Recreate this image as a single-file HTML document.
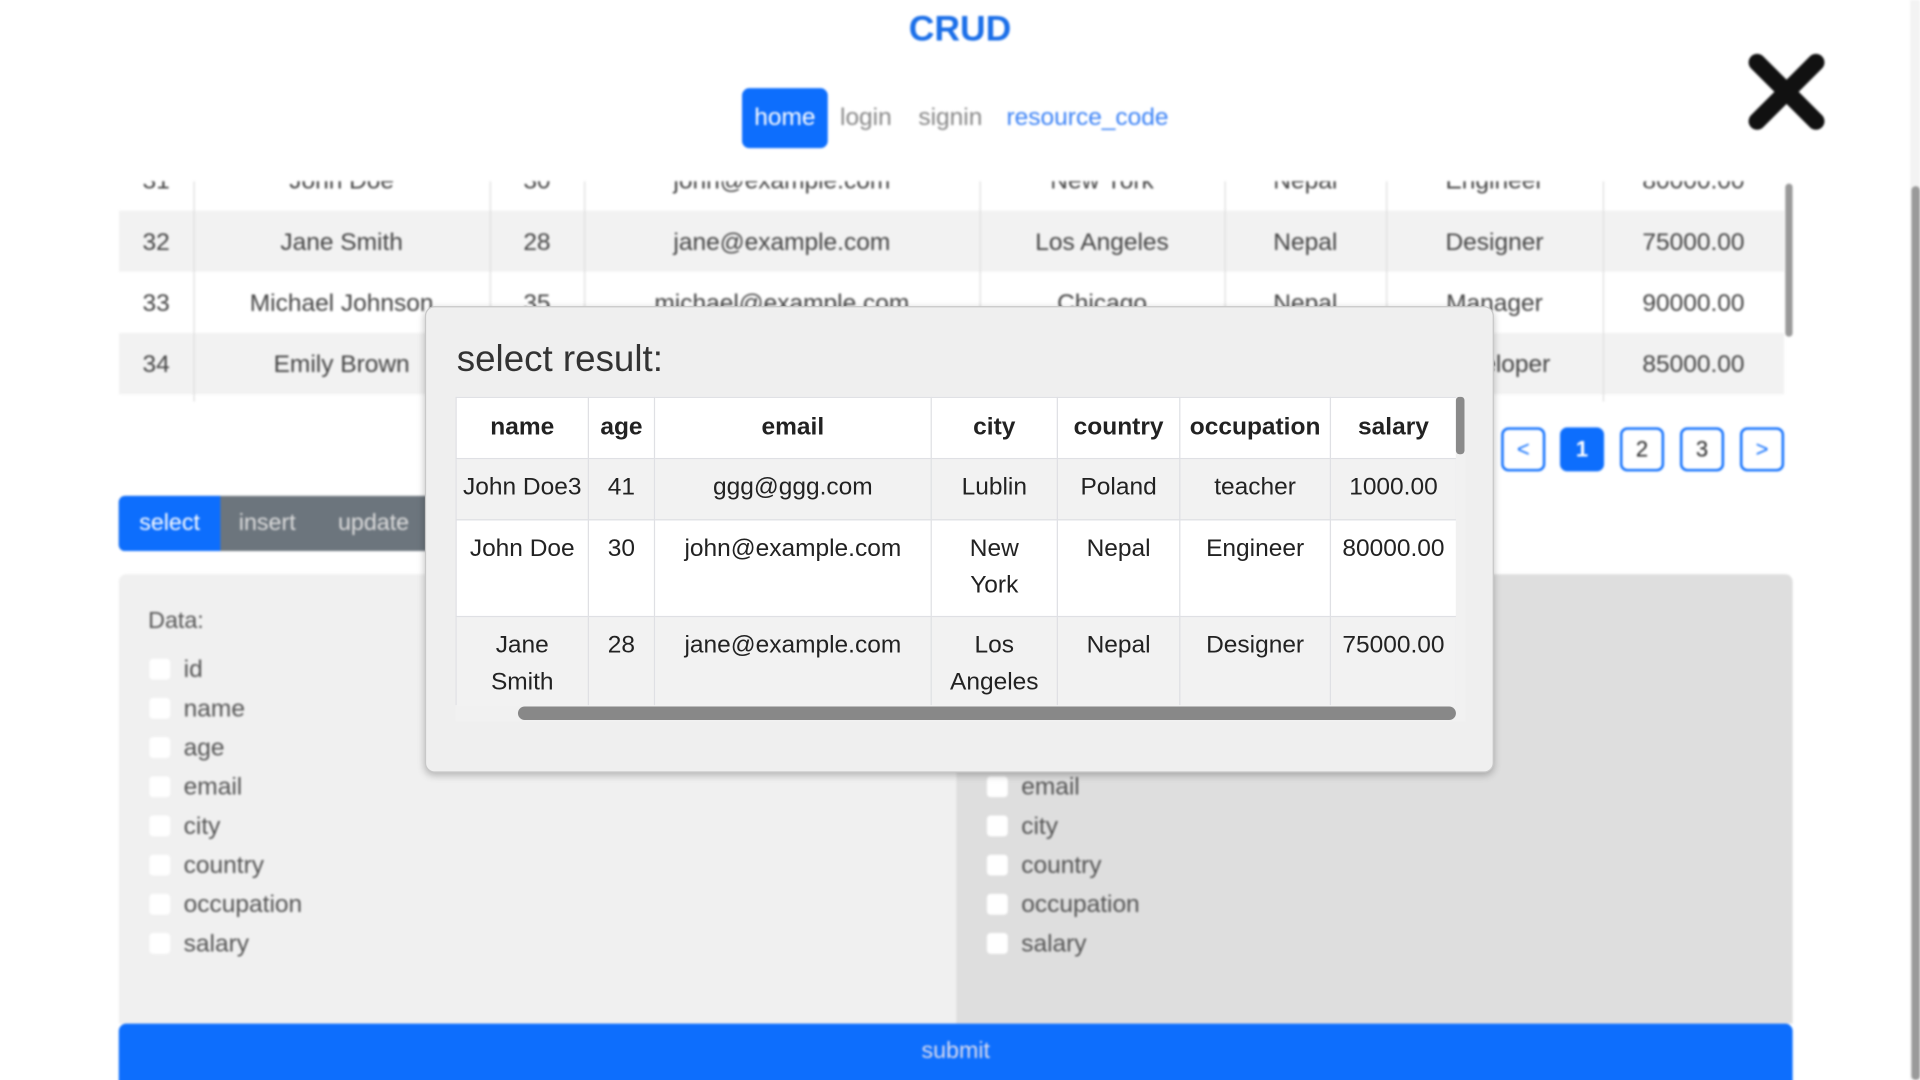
<!DOCTYPE html>
<html><head><meta charset="utf-8"><style>
html,body{margin:0;padding:0;width:1920px;height:1080px;overflow:hidden;background:#fff;font-family:"Liberation Sans","DejaVu Sans",sans-serif;}
#wrap{position:absolute;left:0;top:0;width:1568px;height:882px;transform:scale(1.22449);transform-origin:0 0;overflow:hidden;}
.a{position:absolute;}
#bg{position:absolute;left:0;top:0;width:1568px;height:882px;filter:blur(0.8px);}
.c{position:absolute;text-align:center;font-size:20px;color:#444;}
.cb{position:absolute;width:17px;height:17px;background:#fff;border-radius:3px;}
.lbl{position:absolute;font-size:20px;color:#555;}
.pg{position:absolute;top:349px;width:32px;height:32px;border:2px solid #0d6efd;border-radius:6px;color:#0d6efd;font-size:18px;text-align:center;line-height:32px;background:#fff;}
table{border-collapse:collapse;}
#mt td,#mt th{border:1px solid #dfe0e4;font-size:20px;color:#222;text-align:center;vertical-align:top;padding:0;line-height:29.5px;}
#mt th{font-weight:bold;vertical-align:middle;}
</style></head><body><div id="wrap">
<div id="bg">
<div class="a" style="left:0;top:8px;width:1568px;text-align:center;font-size:29px;font-weight:bold;color:#1a6ee8;">CRUD</div>
<div class="a" style="left:606px;top:72px;width:70px;height:49px;background:#0d6efd;border-radius:6px;color:#fff;font-size:20px;text-align:center;line-height:49px;">home</div>
<div class="a" style="left:686px;top:85px;font-size:20px;color:#888;">login</div>
<div class="a" style="left:750px;top:85px;font-size:20px;color:#888;">signin</div>
<div class="a" style="left:822px;top:85px;font-size:20px;color:#3b82f6;">resource_code</div>
<svg class="a" style="left:1426px;top:42px" width="66" height="66" viewBox="0 0 66 66"><path d="M9 9L57 57M57 9L9 57" stroke="#111" stroke-width="14" stroke-linecap="round"/></svg>
<div class="a" style="left:1560px;top:0;width:8px;height:882px;background:#f3f3f3"></div>
<div class="a" style="left:1561px;top:152px;width:7px;height:730px;background:#9a9a9a;border-radius:4px"></div>
<div class="a" style="left:97px;top:148px;width:1367px;height:180px;overflow:hidden;">
 <div class="a" style="left:0;top:-26px;width:1360px;height:50px;background:#fff"></div>
 <div class="a" style="left:0;top:24px;width:1360px;height:50px;background:#f2f2f2"></div>
 <div class="a" style="left:0;top:74px;width:1360px;height:50px;background:#fff"></div>
 <div class="a" style="left:0;top:124px;width:1360px;height:50px;background:#f2f2f2"></div>
 <div class="a" style="left:61px;top:0;width:1px;height:180px;background:#ddd"></div>
 <div class="a" style="left:303px;top:0;width:1px;height:180px;background:#ddd"></div>
 <div class="a" style="left:380px;top:0;width:1px;height:180px;background:#ddd"></div>
 <div class="a" style="left:703px;top:0;width:1px;height:180px;background:#ddd"></div>
 <div class="a" style="left:903px;top:0;width:1px;height:180px;background:#ddd"></div>
 <div class="a" style="left:1035px;top:0;width:1px;height:180px;background:#ddd"></div>
 <div class="a" style="left:1212px;top:0;width:1px;height:180px;background:#ddd"></div>
 <div class="a" style="left:1361px;top:2px;width:6px;height:125px;background:#999;border-radius:3px"></div>
 <div class="c" style="left:0;top:-11px;width:61px">31</div><div class="c" style="left:61px;top:-11px;width:242px">John Doe</div><div class="c" style="left:303px;top:-11px;width:77px">30</div><div class="c" style="left:380px;top:-11px;width:323px">john@example.com</div><div class="c" style="left:703px;top:-11px;width:200px">New York</div><div class="c" style="left:903px;top:-11px;width:132px">Nepal</div><div class="c" style="left:1035px;top:-11px;width:177px">Engineer</div><div class="c" style="left:1212px;top:-11px;width:148px">80000.00</div>
 <div class="c" style="left:0;top:39px;width:61px">32</div><div class="c" style="left:61px;top:39px;width:242px">Jane Smith</div><div class="c" style="left:303px;top:39px;width:77px">28</div><div class="c" style="left:380px;top:39px;width:323px">jane@example.com</div><div class="c" style="left:703px;top:39px;width:200px">Los Angeles</div><div class="c" style="left:903px;top:39px;width:132px">Nepal</div><div class="c" style="left:1035px;top:39px;width:177px">Designer</div><div class="c" style="left:1212px;top:39px;width:148px">75000.00</div>
 <div class="c" style="left:0;top:89px;width:61px">33</div><div class="c" style="left:61px;top:89px;width:242px">Michael Johnson</div><div class="c" style="left:303px;top:89px;width:77px">35</div><div class="c" style="left:380px;top:89px;width:323px">michael@example.com</div><div class="c" style="left:703px;top:89px;width:200px">Chicago</div><div class="c" style="left:903px;top:89px;width:132px">Nepal</div><div class="c" style="left:1035px;top:89px;width:177px">Manager</div><div class="c" style="left:1212px;top:89px;width:148px">90000.00</div>
 <div class="c" style="left:0;top:139px;width:61px">34</div><div class="c" style="left:61px;top:139px;width:242px">Emily Brown</div><div class="c" style="left:1035px;top:139px;width:177px">Developer</div><div class="c" style="left:1212px;top:139px;width:148px">85000.00</div>
</div>
<div class="pg" style="left:1226px">&lt;</div>
<div class="pg" style="left:1274px;background:#0d6efd;color:#fff;font-weight:bold">1</div>
<div class="pg" style="left:1323px;color:#222">2</div>
<div class="pg" style="left:1372px;color:#222">3</div>
<div class="pg" style="left:1421px">&gt;</div>
<div class="a" style="left:97px;top:405px;width:260px;height:45px;background:#6c757d;border-radius:5px"></div>
<div class="a" style="left:97px;top:405px;width:83px;height:45px;background:#0d6efd;border-radius:5px 0 0 5px;color:#fff;font-size:19px;text-align:center;line-height:45px">select</div>
<div class="a" style="left:195px;top:417px;color:#ddd;font-size:19px">insert</div>
<div class="a" style="left:276px;top:417px;color:#ddd;font-size:19px">update</div>
<div class="a" style="left:97px;top:469px;width:684px;height:367px;background:#f0f0f0;border-radius:6px 0 0 0"></div>
<div class="a" style="left:781px;top:469px;width:683px;height:367px;background:#dedede;border-radius:0 6px 0 0"></div>
<div class="lbl" style="left:121px;top:497px;font-size:19px">Data:</div>
<div class="cb" style="left:122px;top:538px"></div><div class="lbl" style="left:150px;top:536px">id</div>
<div class="cb" style="left:122px;top:570px"></div><div class="lbl" style="left:150px;top:568px">name</div>
<div class="cb" style="left:122px;top:602px"></div><div class="lbl" style="left:150px;top:600px">age</div>
<div class="cb" style="left:122px;top:634px"></div><div class="lbl" style="left:150px;top:632px">email</div>
<div class="cb" style="left:122px;top:666px"></div><div class="lbl" style="left:150px;top:664px">city</div>
<div class="cb" style="left:122px;top:698px"></div><div class="lbl" style="left:150px;top:696px">country</div>
<div class="cb" style="left:122px;top:730px"></div><div class="lbl" style="left:150px;top:728px">occupation</div>
<div class="cb" style="left:122px;top:762px"></div><div class="lbl" style="left:150px;top:760px">salary</div>
<div class="cb" style="left:806px;top:634px"></div><div class="lbl" style="left:834px;top:632px">email</div>
<div class="cb" style="left:806px;top:666px"></div><div class="lbl" style="left:834px;top:664px">city</div>
<div class="cb" style="left:806px;top:698px"></div><div class="lbl" style="left:834px;top:696px">country</div>
<div class="cb" style="left:806px;top:730px"></div><div class="lbl" style="left:834px;top:728px">occupation</div>
<div class="cb" style="left:806px;top:762px"></div><div class="lbl" style="left:834px;top:760px">salary</div>
<div class="a" style="left:97px;top:836px;width:1367px;height:60px;background:#0d6efd;border-radius:6px;color:#dde;font-size:19px;text-align:center;line-height:46px">submit</div>
</div>
<div class="a" style="left:347px;top:250px;width:871px;height:379px;background:#efefef;border:1px solid #c8c8c8;border-radius:8px;box-shadow:0 2px 6px rgba(0,0,0,.25);">
 <div class="a" style="left:25px;top:26px;font-size:30px;color:#333;">select result:</div>
 <div class="a" style="left:24px;top:73px;width:825px;height:252px;overflow:hidden;">
 <table id="mt" style="width:817px;table-layout:fixed;background:#fff">
 <colgroup><col style="width:108px"><col style="width:54px"><col style="width:226px"><col style="width:103px"><col style="width:100px"><col style="width:123px"><col style="width:103px"></colgroup>
 <tr style="height:50px"><th>name</th><th>age</th><th>email</th><th>city</th><th>country</th><th>occupation</th><th>salary</th></tr>
 <tr style="height:50px;background:#f2f2f2"><td style="padding-top:9px">John Doe3</td><td style="padding-top:9px">41</td><td style="padding-top:9px">ggg@ggg.com</td><td style="padding-top:9px">Lublin</td><td style="padding-top:9px">Poland</td><td style="padding-top:9px">teacher</td><td style="padding-top:9px">1000.00</td></tr>
 <tr style="height:79px"><td style="padding-top:9px">John Doe</td><td style="padding-top:9px">30</td><td style="padding-top:9px">john@example.com</td><td style="padding-top:9px">New<br>York</td><td style="padding-top:9px">Nepal</td><td style="padding-top:9px">Engineer</td><td style="padding-top:9px">80000.00</td></tr>
 <tr style="height:79px;background:#f2f2f2"><td style="padding-top:9px">Jane<br>Smith</td><td style="padding-top:9px">28</td><td style="padding-top:9px">jane@example.com</td><td style="padding-top:9px">Los<br>Angeles</td><td style="padding-top:9px">Nepal</td><td style="padding-top:9px">Designer</td><td style="padding-top:9px">75000.00</td></tr>
 </table>
 <div class="a" style="left:817px;top:0;width:8px;height:252px;background:#f1f1f1"></div>
 <div class="a" style="left:817px;top:0;width:7px;height:47px;background:#8a8a8a;border-radius:3px"></div>
 <div class="a" style="left:0;top:252px;width:825px;height:13px;background:#f1f1f1"></div>
 </div>
 <div class="a" style="left:24px;top:325px;width:825px;height:13px;background:#f1f1f1"></div>
 <div class="a" style="left:75px;top:326px;width:766px;height:11px;background:#888;border-radius:6px"></div>
</div>
</div></body></html>
